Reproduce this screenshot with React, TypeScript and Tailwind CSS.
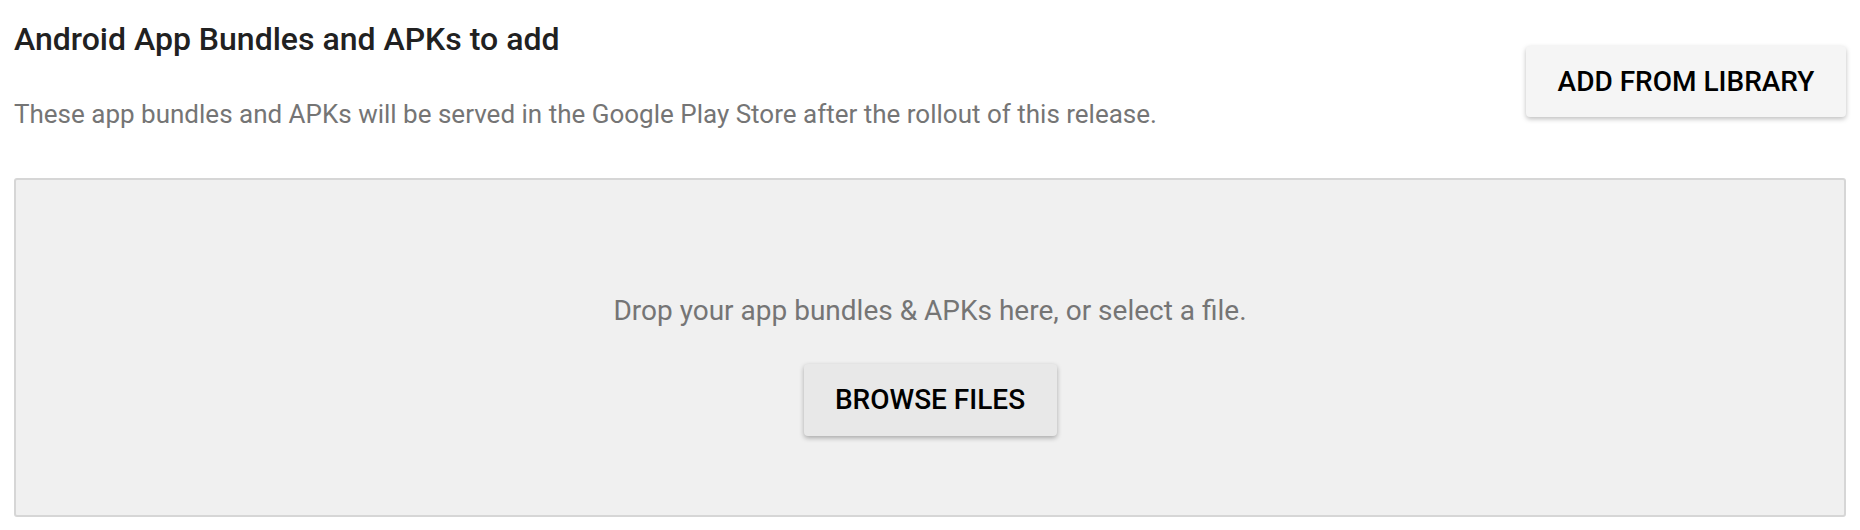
const App = () => {
    return (
        <div className="min-h-[530px] bg-white px-[14px] font-['Roboto','Liberation_Sans',sans-serif]">
            <div className="flex items-start justify-between">
                <div className="pt-[21px]">
                    <h2 className="text-[32px] leading-[36px] font-medium text-[#212121]">
                        Android App Bundles and APKs to add
                    </h2>
                    <p className="mt-[42px] text-[26px] leading-[30px] text-[#757575]">
                        These app bundles and APKs will be served in the Google Play Store after the rollout of this release.
                    </p>
                </div>
                <button className="mt-[46px] h-[71px] w-[320px] rounded-[4px] bg-[#f5f5f5] text-[28px] font-medium text-black shadow-[0_2px_5px_rgba(0,0,0,0.26)]">
                    ADD FROM LIBRARY
                </button>
            </div>
            <div className="mt-[49px] flex h-[339px] flex-col items-center rounded-[3px] border-2 border-[#d6d6d6] bg-[#f0f0f0]">
                <p className="mt-[116px] text-[28px] leading-[30px] text-[#757575]">
                    Drop your app bundles &amp; APKs here, or select a file.
                </p>
                <button className="mt-[38px] h-[72px] w-[253px] rounded-[4px] bg-[#e8e8e8] text-[28px] font-medium text-black shadow-[0_2px_5px_rgba(0,0,0,0.3)]">
                    BROWSE FILES
                </button>
            </div>
        </div>
    );
};
export default App;
